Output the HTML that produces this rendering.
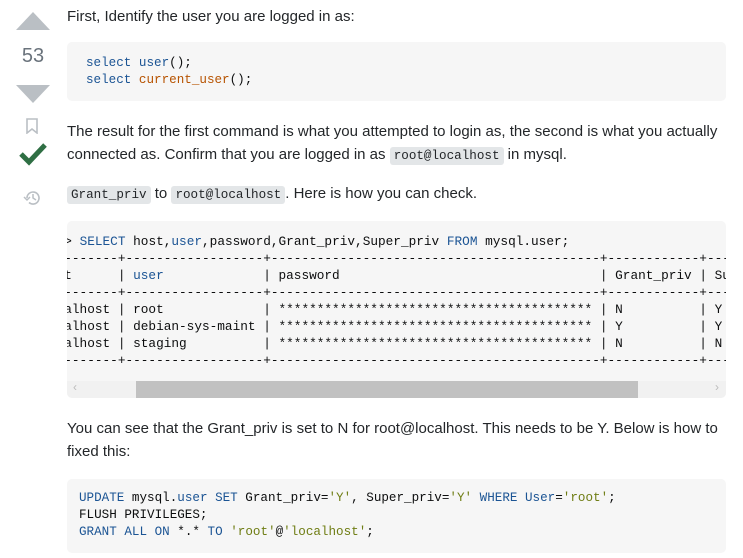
<!DOCTYPE html>
<html><head><meta charset="utf-8"><style>
body{margin:0;width:743px;height:558px;background:#fff;position:relative;overflow:hidden;font-family:"Liberation Sans",sans-serif;color:#232629;}
.a{position:absolute}
.p{position:absolute;left:67px;font-size:15px;line-height:23px;color:#232629;white-space:nowrap}
.code{position:absolute;left:67px;width:659px;background:#f6f6f6;border-radius:5px;overflow:hidden}
pre{margin:0;font-family:"Liberation Mono",monospace;font-size:12.6px;line-height:17px;color:#0c0d0e;white-space:pre}
.t{font-size:12.75px}
.k{color:#1b5494}.o{color:#b75301}.s{color:#6f7d14}
.ic{font-family:"Liberation Mono",monospace;font-size:12.6px;background:#e3e6e8;border-radius:3px;padding:2px 4px}
</style></head><body>
<svg class="a" style="left:16px;top:12px" width="34" height="18"><polygon points="0,18 17,0 34,18" fill="#babfc4"/></svg>
<div class="a" style="left:17px;top:45px;width:32px;text-align:center;font-size:20px;color:#6a737c">53</div>
<svg class="a" style="left:16px;top:85px" width="34" height="18"><polygon points="0,0 34,0 17,18" fill="#babfc4"/></svg>
<svg class="a" style="left:25px;top:118px" width="14" height="16"><path d="M2 1h10v14l-5-4-5 4z" fill="none" stroke="#babfc4" stroke-width="1.6"/></svg>
<svg class="a" style="left:19px;top:142px" width="28" height="24"><path d="M2 12l8 8L26 3" fill="none" stroke="#2f6f44" stroke-width="5"/></svg>
<svg class="a" style="left:23px;top:188px" width="20" height="20"><path d="M4 10a6 6 0 1 1 2 4.5" fill="none" stroke="#babfc4" stroke-width="1.6"/><path d="M1 9l3 3 3-3" fill="none" stroke="#babfc4" stroke-width="1.5"/><path d="M10 6v4l3 2" fill="none" stroke="#babfc4" stroke-width="1.5"/></svg>

<div class="p" style="top:5px">First, Identify the user you are logged in as:</div>
<div class="code" style="top:42px;height:59px"><pre style="padding:13px 19px"><span class="k">select</span> <span class="k">user</span>();
<span class="k">select</span> <span class="o">current_user</span>();</pre></div>
<div class="p" style="top:120px">The result for the first command is what you attempted to login as, the second is what you actually<br>connected as. Confirm that you are logged in as <span class="ic">root@localhost</span> in mysql.</div>
<div class="p" style="top:182px"><span class="ic">Grant_priv</span> to <span class="ic">root@localhost</span>. Here is how you can check.</div>

<div class="code" style="top:221px;height:177px">
<pre class="t" style="padding:12px 0 0 0;margin-left:-41px">mysql&gt; <span class="k">SELECT</span> host,<span class="k">user</span>,password,Grant_priv,Super_priv <span class="k">FROM</span> mysql.user;
+-----------+------------------+-------------------------------------------+------------+------------+
| host      | <span class="k">user</span>             | password                                  | Grant_priv | Super_priv |
+-----------+------------------+-------------------------------------------+------------+------------+
| localhost | root             | ***************************************** | N          | Y          |
| localhost | debian-sys-maint | ***************************************** | Y          | Y          |
| localhost | staging          | ***************************************** | N          | N          |
+-----------+------------------+-------------------------------------------+------------+------------+</pre>
<div class="a" style="left:0;top:160px;width:659px;height:17px;background:#f1f1f1"></div>
<div class="a" style="left:69px;top:160px;width:502px;height:17px;background:#c1c1c1"></div>
<div class="a" style="left:6px;top:159px;font-size:12px;color:#bbb">&lsaquo;</div>
<div class="a" style="left:648px;top:159px;font-size:12px;color:#bbb">&rsaquo;</div>
</div>

<div class="p" style="top:417px">You can see that the Grant_priv is set to N for root@localhost. This needs to be Y. Below is how to<br>fixed this:</div>
<div class="code" style="top:479px;height:74px"><pre style="padding:11px 12px"><span class="k">UPDATE</span> mysql.<span class="k">user</span> <span class="k">SET</span> Grant_priv=<span class="s">'Y'</span>, Super_priv=<span class="s">'Y'</span> <span class="k">WHERE</span> <span class="k">User</span>=<span class="s">'root'</span>;
FLUSH PRIVILEGES;
<span class="k">GRANT</span> <span class="k">ALL</span> <span class="k">ON</span> *.* <span class="k">TO</span> <span class="s">'root'</span>@<span class="s">'localhost'</span>;</pre></div>
</body></html>
